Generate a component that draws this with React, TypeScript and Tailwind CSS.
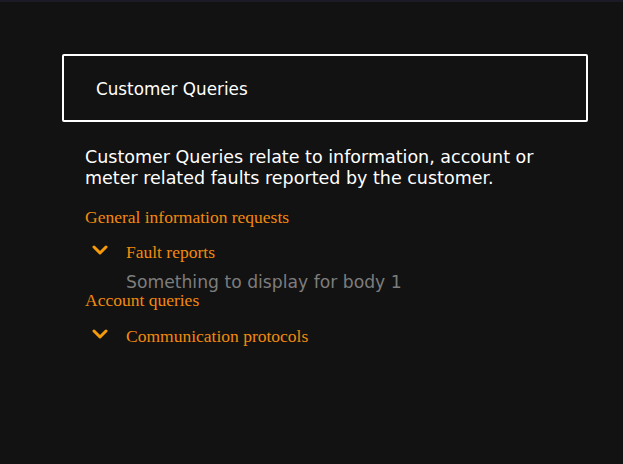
const sans = "font-['DejaVu_Sans',sans-serif]";
const serif = "font-['Liberation_Serif',serif]";

function Item({ title, body }: { title: string; body?: string }) {
  return (
    <div>
      <div className="flex items-center h-[22px]">
        <span className="w-[41px] flex justify-start pl-[7px] pt-[4px] text-[#f59b0a]">
          <svg width="16" height="10" viewBox="0 0 16 10" fill="none">
            <path d="M2 2 L8 8 L14 2" stroke="currentColor" strokeWidth="3" strokeLinecap="round" strokeLinejoin="round" />
          </svg>
        </span>
        <span className={`${serif} text-[17.5px] leading-[20px] text-[#f18a0e] pt-[8px]`}>{title}</span>
      </div>
      {body && (
        <p className={`${sans} pl-[41px] text-[17.2px] leading-[16px] text-[#7d7d7d] mt-[15px]`}>{body}</p>
      )}
    </div>
  );
}

export default function App() {
  return (
    <div className="min-h-[464px] bg-[#121212]">
      <div className="h-[2px] bg-[#1b1a26]" />
      <div className="ml-[62px] w-[526px] pt-[52px]">
        <div className={`h-[68px] border-2 border-white rounded-[2px] flex items-center pl-[32px] pt-[3px] ${sans} text-[16.8px] text-white`}>
          Customer Queries
        </div>
        <div className="pl-[23px] pt-[25px]">
          <p className={`${sans} text-[17.5px] leading-[21px] text-white`}>
            Customer Queries relate to information, account or
            <br />
            meter related faults reported by the customer.
          </p>
          <h3 className={`${serif} text-[17.5px] leading-[20px] text-[#f18a0e] mt-[18px]`}>General information requests</h3>
          <div className="mt-[10px]">
            <Item title="Fault reports" body="Something to display for body 1" />
          </div>
          <h3 className={`${serif} text-[17.5px] leading-[20px] text-[#f18a0e]`}>Account queries</h3>
          <div className="mt-[11px]">
            <Item title="Communication protocols" />
          </div>
        </div>
      </div>
    </div>
  );
}
